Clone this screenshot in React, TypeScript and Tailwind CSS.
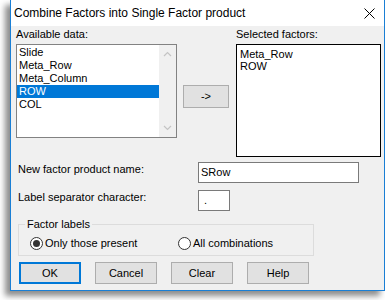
const leftItems = ["Slide", "Meta_Row", "Meta_Column", "ROW", "COL"];
const rightItems = ["Meta_Row", "ROW"];

const Chevron = ({ down }: { down?: boolean }) => (
  <svg width="9" height="6" viewBox="0 0 9 6">
    <path
      d={down ? "M1 1 L4.5 4.5 L8 1" : "M1 5 L4.5 1.5 L8 5"}
      fill="none"
      stroke="#c4c4c4"
      strokeWidth="1.2"
    />
  </svg>
);

const Radio = ({ checked, label }: { checked?: boolean; label: string }) => (
  <div className="flex items-center gap-[2px]">
    <div className="w-[13px] h-[13px] rounded-full border border-[#333] bg-white flex items-center justify-center">
      {checked && <div className="w-[7px] h-[7px] rounded-full bg-[#333]" />}
    </div>
    <span>{label}</span>
  </div>
);

const Button = ({ label, focused }: { label: string; focused?: boolean }) => (
  <div
    className={
      "w-[62px] h-[22px] flex items-center justify-center bg-[#e1e1e1] " +
      (focused ? "border-2 border-[#0078d7]" : "border border-[#adadad]")
    }
  >
    {label}
  </div>
);

const App = () => {
  return (
    <div className="w-[385px] h-[300px] bg-white font-['Liberation_Sans',Arial,sans-serif] text-[11px] leading-[13px] text-black">
      <div className="ml-[10px] w-[375px] h-[291px] flex flex-col border-x border-b border-[#1a7fd5] shadow-[-5px_5px_6px_rgba(0,0,0,0.45)]">
        {/* title bar */}
        <div className="h-[26px] bg-white flex items-center justify-between pl-[3px] pr-[9px]">
          <span className="text-[12px] leading-[14px]">Combine Factors into Single Factor product</span>
          <svg width="11" height="11" viewBox="0 0 11 11">
            <path d="M0.5 0.5 L10.5 10.5 M10.5 0.5 L0.5 10.5" stroke="#000" strokeWidth="1" />
          </svg>
        </div>

        {/* body */}
        <div className="flex-1 bg-[#f0f0f0] pl-[5px] pt-[2px]">
          <div className="flex items-start">
            <div className="w-[161px]">
              <div className="mb-[3px]">Available data:</div>
              <div className="h-[94px] border border-[#828282] bg-white flex">
                <div className="flex-1 pt-[1px]">
                  {leftItems.map((item) => (
                    <div
                      key={item}
                      className={
                        "h-[13px] pl-[2px] " +
                        (item === "ROW" ? "bg-[#0078d7] text-white" : "")
                      }
                    >
                      {item}
                    </div>
                  ))}
                </div>
                <div className="w-[17px] bg-[#f0f0f0] flex flex-col items-center justify-between py-[6px]">
                  <Chevron />
                  <Chevron down />
                </div>
              </div>
            </div>

            <div className="ml-[6px] mt-[57px] w-[46px] h-[23px] bg-[#e1e1e1] border border-[#adadad] flex items-center justify-center">
              -&gt;
            </div>

            <div className="ml-[7px] w-[145px]">
              <div className="mb-[3px]">Selected factors:</div>
              <div className="h-[113px] border border-black bg-white pl-[3px] pt-[4px] leading-[11.5px]">
                {rightItems.map((item) => (
                  <div key={item}>{item}</div>
                ))}
              </div>
            </div>
          </div>

          <div className="flex items-start mt-[5px]">
            <div className="w-[180px] ml-[2px] mt-[1px]">New factor product name:</div>
            <div className="w-[161px] h-[21px] border border-[#7a7a7a] bg-white pl-[2px] flex items-center">
              SRow
            </div>
          </div>

          <div className="flex items-start mt-[7px]">
            <div className="w-[180px] ml-[2px] mt-[1px]">Label separator character:</div>
            <div className="w-[32px] h-[21px] border border-[#7a7a7a] bg-white pl-[5px] flex items-center">
              .
            </div>
          </div>

          <fieldset className="mt-[7px] ml-[2px] w-[296px] border border-[#dcdcdc] pl-[6px] pt-[6px] pb-[5px]">
            <legend className="px-[2px]">Factor labels</legend>
            <div className="flex ml-[5px]">
              <div className="w-[148px]">
                <Radio checked label="Only those present" />
              </div>
              <Radio label="All combinations" />
            </div>
          </fieldset>

          <div className="flex gap-[14px] ml-[3px] mt-[6px]">
            <Button label="OK" focused />
            <Button label="Cancel" />
            <Button label="Clear" />
            <Button label="Help" />
          </div>
        </div>
      </div>
    </div>
  );
};

export default App;
